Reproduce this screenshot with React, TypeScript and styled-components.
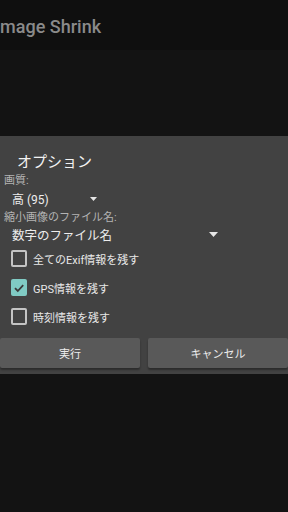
import React from 'react'
import styled, { createGlobalStyle } from 'styled-components'

const GlobalStyle = createGlobalStyle`
	html, body {
		margin: 0;
		padding: 0;
		background: #131313;
	}
	* {
		box-sizing: border-box;
	}
`

const FONT = `Roboto, "Noto Sans CJK JP", "Noto Sans", sans-serif`

interface CheckOption {
	label: string
	checked: boolean
}

const checkOptions: CheckOption[] = [
	{ label: '全てのExif情報を残す', checked: false },
	{ label: 'GPS情報を残す', checked: true },
	{ label: '時刻情報を残す', checked: false },
]

export default function App() {
	return (
		<>
			<GlobalStyle />
			<Screen>
				{/* Toolbar */}
				<AppBar>
					<AppTitle>Image Shrink</AppTitle>
				</AppBar>

				<Body>
					<Dialog>
						<DialogTitle>オプション</DialogTitle>

						<FieldLabel>画質:</FieldLabel>
						<Spinner width="101px" height="21px">
							<SpinnerValue size="12px">高 (95)</SpinnerValue>
							<Arrow width={7} />
						</Spinner>

						<FieldLabel>縮小画像のファイル名:</FieldLabel>
						<Spinner width="222px" height="19px">
							<SpinnerValue size="12.5px">数字のファイル名</SpinnerValue>
							<Arrow width={9} />
						</Spinner>

						{checkOptions.map((option) => (
							<CheckRow key={option.label}>
								<CheckBox checked={option.checked}>
									{option.checked && (
										<svg width="12" height="12" viewBox="0 0 12 12">
											<path
												d="M2 6.2 L4.8 9 L10.2 3.2"
												fill="none"
												stroke="#3a3a3a"
												strokeWidth="1.8"
											/>
										</svg>
									)}
								</CheckBox>
								<CheckLabel>{option.label}</CheckLabel>
							</CheckRow>
						))}

						<ButtonBar>
							<DialogButton type="button">実行</DialogButton>
							<DialogButton type="button">キャンセル</DialogButton>
						</ButtonBar>
					</Dialog>
				</Body>
			</Screen>
		</>
	)
}

function Arrow({ width }: { width: number }) {
	const h = Math.round(width * 0.55)
	return (
		<svg width={width} height={h} viewBox={`0 0 ${width} ${h}`}>
			<polygon points={`0,0 ${width},0 ${width / 2},${h}`} fill="#e6e6e6" />
		</svg>
	)
}

const Screen = styled.div`
	width: 288px;
	height: 512px;
	overflow: hidden;
	display: flex;
	flex-direction: column;
	background: #131313;
	font-family: ${FONT};
`

const AppBar = styled.div`
	height: 50px;
	flex-shrink: 0;
	display: flex;
	align-items: center;
	background: #0f0f0f;
	padding-top: 2px;
`

const AppTitle = styled.div`
	margin-left: -5px;
	font-size: 18px;
	font-weight: 500;
	color: #8a8a8a;
	white-space: nowrap;
`

const Body = styled.div`
	flex: 1;
	padding-top: 86px;
`

const Dialog = styled.div`
	background: #424242;
	padding-top: 16px;
	padding-bottom: 6px;
	display: flex;
	flex-direction: column;
`

const DialogTitle = styled.div`
	margin-left: 17px;
	font-size: 15px;
	line-height: 20px;
	color: #f2f2f2;
`

const FieldLabel = styled.div`
	margin-top: 2px;
	padding-left: 4px;
	font-size: 11px;
	line-height: 14px;
	color: #b4b4b4;
	margin-bottom: -2px;
`

const Spinner = styled.div<{ width: string; height: string }>`
	width: ${(p) => p.width};
	height: ${(p) => p.height};
	padding-left: 12px;
	margin-top: 2px;
	display: flex;
	align-items: center;
	justify-content: space-between;
	padding-right: 4px;
`

const SpinnerValue = styled.span<{ size: string }>`
	font-size: ${(p) => p.size};
	color: #ededed;
`

const CheckRow = styled.div`
	height: 29px;
	padding-left: 11px;
	display: flex;
	align-items: center;
	gap: 6px;
`

const CheckBox = styled.div<{ checked: boolean }>`
	width: 16px;
	height: 17px;
	border-radius: 2px;
	display: flex;
	align-items: center;
	justify-content: center;
	background: ${(p) => (p.checked ? '#80cbc4' : 'transparent')};
	border: ${(p) => (p.checked ? 'none' : '2px solid #c4c4c4')};
`

const CheckLabel = styled.span`
	font-size: 11px;
	color: #e8e8e8;
`

const ButtonBar = styled.div`
	margin-top: 7px;
	display: grid;
	grid-template-columns: 1fr 1fr;
	gap: 8px;
`

const DialogButton = styled.button`
	height: 30px;
	border: none;
	border-radius: 2px;
	background: #595959;
	color: #ececec;
	font-family: ${FONT};
	font-size: 11px;
	box-shadow: 0 2px 2px rgba(0, 0, 0, 0.35);
	padding: 0;
`
